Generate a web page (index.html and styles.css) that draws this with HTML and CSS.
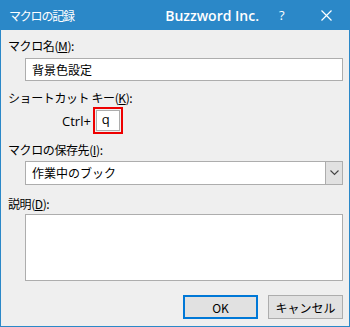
FILE: index.html
```html
<!DOCTYPE html>
<html lang="ja">
<head>
  <meta charset="UTF-8"/>
  <title>マクロの記録</title>
  <link rel="stylesheet" href="styles.css">
</head>
<body>
  <div class="window">

    <!-- Title bar -->
    <div class="titlebar">
      <span class="title">マクロの記録</span>
      <span class="brand">Buzzword Inc.</span>
      <span class="help">?</span>
      <span class="close">
        <svg width="11" height="11" viewBox="0 0 11 11"><path d="M0.5 0.5L10.5 10.5M10.5 0.5L0.5 10.5" stroke="#fff" stroke-width="1.2" fill="none"/></svg>
      </span>
    </div>

    <!-- Dialog body -->
    <div class="content">
      <div class="label l-name">マクロ名(<u>M</u>):</div>
      <div class="field f-name">背景色設定</div>

      <div class="label l-key">ショートカット キー(<u>K</u>):</div>
      <div class="key-row">
        <span class="ctrl">Ctrl+</span>
        <span class="highlight"><span class="key-input">q</span></span>
      </div>

      <div class="label l-store">マクロの保存先(<u>I</u>):</div>
      <div class="combo">
        <span class="combo-text">作業中のブック</span>
        <span class="combo-btn">
          <svg width="9" height="6" viewBox="0 0 9 6"><path d="M0.5 0.5L4.5 4.5L8.5 0.5" stroke="#444" stroke-width="1.1" fill="none"/></svg>
        </span>
      </div>

      <div class="label l-desc">説明(<u>D</u>):</div>
      <div class="field memo"></div>

      <div class="buttons">
        <button class="btn default">OK</button>
        <button class="btn">キャンセル</button>
      </div>
    </div>
  </div>
</body>
</html>
```

FILE: styles.css
```css
:root {
  --accent: #2b88c8;
  --face: #efefef;
  --edge: #adadad;
}
* { margin:0; padding:0; box-sizing:border-box }
body {
  font-family:'Noto Sans CJK JP','Noto Sans',sans-serif;
  font-size:12px;
  color:#000;
  background:#fff;
}
u { text-decoration:underline; text-underline-offset:1px }

/* Window frame */
.window {
  width:350px; height:327px;
  border:1px solid var(--accent); border-top:none;
  background:var(--face);
  display:flex; flex-direction:column;
}

/* Title bar */
.titlebar {
  height:30px; margin:0 -1px;
  background:var(--accent); color:#fff;
  display:flex; align-items:center;
  padding-left:9px;
}
.title { font-size:12px; letter-spacing:-1.2px; flex:1 }
.brand {
  font-family:'Open Sans',sans-serif; font-weight:600;
  font-size:14px;
  margin-right:20px;
}
.help {
  font-family:'Open Sans',sans-serif; font-size:13px;
  width:10px; margin-right:32px;
}
.close { width:29px; display:flex; }

/* Body */
.content {
  display:flex; flex-direction:column;
  padding:8px 0 0 7px;
}
.label { line-height:16px; letter-spacing:-0.4px }
.field {
  margin-left:17px; width:318px;
  background:#fff; border:1px solid var(--edge);
  padding-left:6px;
}
.f-name { margin-top:4px; height:23px; line-height:21px }
.l-key { margin-top:9px }
.key-row {
  margin-top:1px; padding-left:54px;
  display:flex; align-items:center; gap:2px;
}
.ctrl { font-family:'Open Sans',sans-serif; font-size:13px }
.highlight {
  width:30px; height:27px;
  border:2px solid #e00; padding:1px;
  display:flex;
}
.key-input {
  flex:1; background:#fff; border:1px solid var(--edge);
  font-family:'Open Sans',sans-serif; font-size:13px;
  padding-left:5px; line-height:17px;
}
.l-store { margin-top:8px }
.combo {
  margin:3px 0 0 17px; width:318px; height:24px;
  background:#fff; border:1px solid var(--edge);
  display:flex;
}
.combo-text { flex:1; padding-left:6px; line-height:22px }
.combo-btn {
  width:17px; background:#e1e1e1;
  border-left:1px solid var(--edge);
  display:flex; align-items:center; justify-content:center;
}
.l-desc { margin-top:11px }
.memo { margin-top:2px; height:67px }

/* Buttons */
.buttons {
  margin-top:14px; padding-right:6px;
  display:flex; justify-content:flex-end; gap:10px;
}
.btn {
  width:75px; height:24px;
  background:#e1e1e1; border:1px solid var(--edge);
  font-family:inherit; font-size:12px; color:#000;
}
.btn.default { border:2px solid #0078d7 }
```
